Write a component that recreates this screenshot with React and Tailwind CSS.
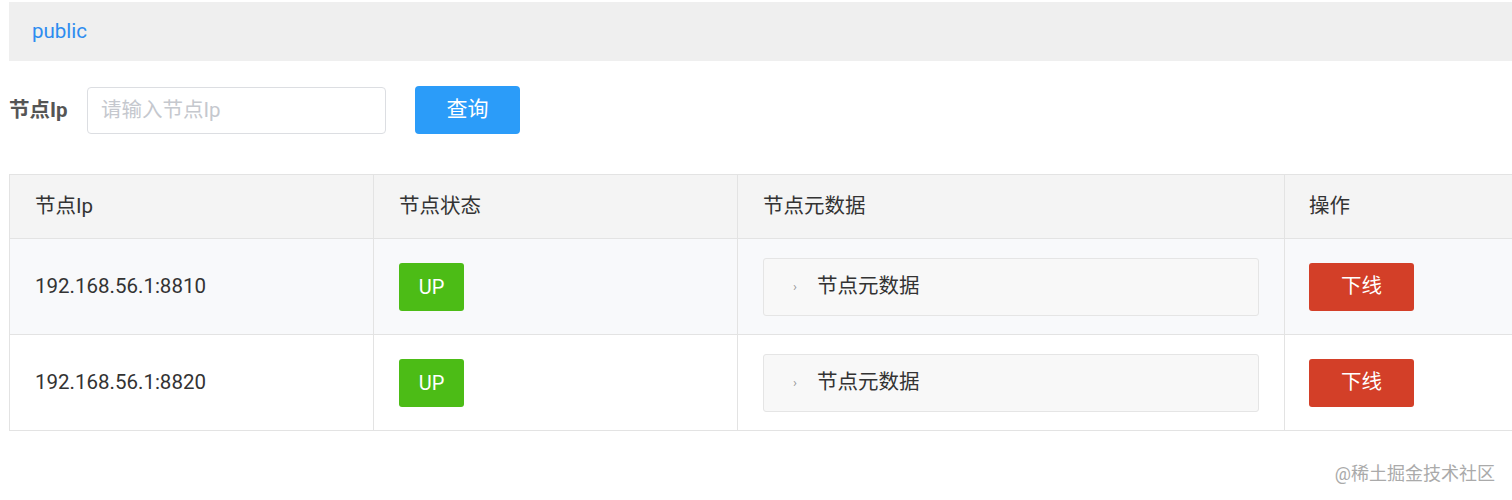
import { useState } from "react";

const nodes = [
  { ip: "192.168.56.1:8810", status: "UP" },
  { ip: "192.168.56.1:8820", status: "UP" },
];

function App() {
  const [query, setQuery] = useState("");

  return (
    <div
      className="relative w-[1512px] h-[500px] overflow-hidden bg-white text-[#333]"
      style={{ fontFamily: 'Roboto, "Noto Sans CJK SC", sans-serif' }}
    >
      <div className="pt-[2px] pl-[9px]">
        <div className="w-[1520px] h-[59px] bg-[#efefef] flex items-center pl-[23px]">
          <span className="text-[20.5px] text-[#2d8cf0]">public</span>
        </div>

        <div className="flex items-center mt-[25px] h-[48px]">
          <label className="text-[20.5px] font-bold text-[#555] w-[78px]">节点Ip</label>
          <input
            type="text"
            placeholder="请输入节点Ip"
            value={query}
            onChange={(e) => setQuery(e.target.value)}
            className="w-[299px] h-[47px] px-[13px] text-[20.5px] border border-[#dcdee2] rounded-[4px] placeholder:text-[#c5c8ce] focus:outline-none"
          />
          <button className="ml-[29px] w-[105px] h-[48px] rounded-[4px] bg-[#2b9cf9] text-white text-[21px]">
            查询
          </button>
        </div>

        <table className="mt-[40px] w-[1560px] border-collapse text-[20.5px] table-fixed">
          <colgroup>
            <col className="w-[364px]" />
            <col className="w-[364px]" />
            <col className="w-[547px]" />
            <col />
          </colgroup>
          <thead>
            <tr className="h-[64px] bg-[#f4f4f4]">
              <th className="border border-[#e3e3e3] text-left font-normal pl-[25px]">节点Ip</th>
              <th className="border border-[#e3e3e3] text-left font-normal pl-[25px]">节点状态</th>
              <th className="border border-[#e3e3e3] text-left font-normal pl-[25px]">节点元数据</th>
              <th className="border border-[#e3e3e3] text-left font-normal pl-[24px]">操作</th>
            </tr>
          </thead>
          <tbody>
            {nodes.map((node, i) => (
              <tr key={node.ip} className={i === 0 ? "h-[96px] bg-[#f8f9fb]" : "h-[96px] bg-white"}>
                <td className="border border-[#e3e3e3] pl-[25px]">{node.ip}</td>
                <td className="border border-[#e3e3e3] pl-[25px]">
                  <span className="inline-flex items-center justify-center w-[65px] h-[48px] rounded-[3px] bg-[#4cbc16] text-white text-[20px]">
                    {node.status}
                  </span>
                </td>
                <td className="border border-[#e3e3e3] pl-[25px] pr-[25px]">
                  <div className="flex items-center h-[58px] bg-[#f8f8f8] border border-[#e5e5e5] rounded-[3px] pl-[29px]">
                    <span className="text-[13px] text-[#999] mr-[20px]">›</span>
                    <span>节点元数据</span>
                  </div>
                </td>
                <td className="border border-[#e3e3e3] pl-[24px]">
                  <button className="w-[105px] h-[48px] rounded-[3px] bg-[#d33f28] text-white text-[20.5px]">下线</button>
                </td>
              </tr>
            ))}
          </tbody>
        </table>
      </div>

      <div className="absolute right-[17px] top-[460px] text-[18px] text-[#aaa]">@稀土掘金技术社区</div>
    </div>
  );
}

export default App;
